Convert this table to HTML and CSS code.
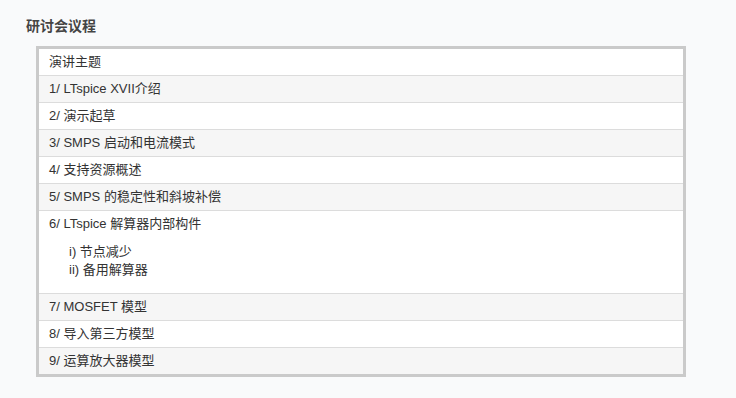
FILE: index.html
```html
<!DOCTYPE html>
<html lang="zh">
<head>
<meta charset="utf-8">
<title>研讨会议程</title>
<link rel="stylesheet" href="styles.css">
</head>
<body>
<section class="agenda">
  <h2 class="agenda-title">研讨会议程</h2>
  <table class="agenda-table">
    <tbody>
      <tr><td>演讲主题</td></tr>
      <tr><td>1/ LTspice XVII介绍</td></tr>
      <tr><td>2/ 演示起草</td></tr>
      <tr><td>3/ SMPS 启动和电流模式</td></tr>
      <tr><td>4/ 支持资源概述</td></tr>
      <tr><td>5/ SMPS 的稳定性和斜坡补偿</td></tr>
      <tr><td>6/ LTspice 解算器内部构件
        <ul class="sub-list">
          <li>i) 节点减少</li>
          <li>ii) 备用解算器</li>
        </ul>
      </td></tr>
      <tr><td>7/ MOSFET 模型</td></tr>
      <tr><td>8/ 导入第三方模型</td></tr>
      <tr><td>9/ 运算放大器模型</td></tr>
    </tbody>
  </table>
</section>
</body>
</html>
```
FILE: styles.css
```css
html, body {
  margin: 0;
  padding: 0;
  background: #f9fafb;
}
body {
  font-family: "Liberation Sans", Arial, "Noto Sans CJK SC", sans-serif;
  color: #333;
}
.agenda {
  padding: 16px 0 0 26px;
}
.agenda-title {
  margin: 0 0 10px;
  font-size: 14px;
  line-height: 20px;
  font-weight: bold;
  color: #444;
}
.agenda-table {
  margin-left: 10px;
  width: 650px;
  border: 3px solid #cacaca;
  border-collapse: separate;
  border-spacing: 0;
  background: #fff;
}
.agenda-table td {
  padding: 4px 10px;
  font-size: 13px;
  line-height: 18px;
  border-top: 1px solid #dcdcdc;
  color: #333;
}
.agenda-table tr:first-child td {
  border-top: none;
}
.agenda-table tr:nth-child(even) td {
  background: #f6f6f6;
}
.sub-list {
  list-style: none;
  margin: 10px 0;
  padding-left: 20px;
}
```
